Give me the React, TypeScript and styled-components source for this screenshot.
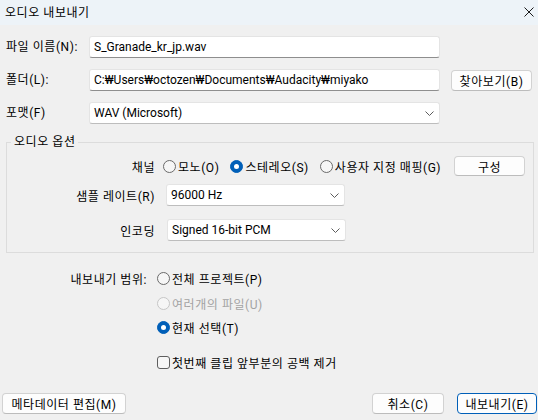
import styled, { createGlobalStyle, css } from "styled-components";

const GlobalStyle = createGlobalStyle`
  html, body {
    margin: 0;
    padding: 0;
  }
  body {
    background: #f0f0f0;
    font-family: "Roboto", "Noto Sans CJK KR", sans-serif;
    font-size: 12px;
    color: #000;
  }
`;

// hangul in Noto Sans CJK KR runs a little narrower than Malgun Gothic
const hangulText = css`
  letter-spacing: 0.55px;
  white-space: nowrap;
`;

const Window = styled.div`
  display: flex;
  flex-direction: column;
  width: 538px;
  height: 420px;
  background: #f0f0f0;
  overflow: hidden;
`;

const TitleBar = styled.div`
  display: flex;
  align-items: center;
  justify-content: space-between;
  height: 25px;
  padding: 0 4px 0 5px;
  background: #edf3f8;
`;

const Title = styled.span`
  ${hangulText};
  line-height: 16px;
`;

const CloseIcon = styled.svg`
  width: 10px;
  height: 10px;
  margin-bottom: 2px;
`;

const FileGrid = styled.div`
  display: grid;
  grid-template-columns: 72px 351px 81px;
  grid-auto-rows: 22px;
  column-gap: 11px;
  row-gap: 11px;
  align-items: center;
  margin: 11px 0 0 6px;
`;

const Label = styled.span`
  ${hangulText};
  line-height: 16px;
`;

const FieldLabel = styled.span<{ $height: number }>`
  ${hangulText};
  display: flex;
  align-items: center;
  justify-content: flex-end;
  height: ${(p) => p.$height}px;
`;

const TextField = styled.div`
  display: flex;
  align-items: center;
  box-sizing: border-box;
  height: 22px;
  padding-left: 4px;
  background: #fff;
  border: 1px solid #e4e4e4;
  border-bottom-color: #8e8e8e;
  border-radius: 3px;
  white-space: nowrap;
  overflow: hidden;
`;

const ComboBox = styled.div<{ $width?: number; $offset?: number }>`
  display: flex;
  align-items: center;
  justify-content: space-between;
  box-sizing: border-box;
  width: ${(p) => (p.$width ? `${p.$width}px` : "auto")};
  height: 22px;
  margin-left: ${(p) => p.$offset ?? 0}px;
  padding: 0 5px 0 4px;
  background: #fff;
  border: 1px solid #e4e4e4;
  border-bottom-color: #bdbdbd;
  border-radius: 3px;
  white-space: nowrap;
`;

const Chevron = styled.svg`
  width: 9px;
  height: 5px;
  flex-shrink: 0;
`;

const Button = styled.button<{ $width: number; $height?: number; $primary?: boolean }>`
  ${hangulText};
  box-sizing: border-box;
  width: ${(p) => p.$width}px;
  height: ${(p) => p.$height ?? 21}px;
  padding: 0;
  font-family: inherit;
  font-size: 12px;
  color: #000;
  background: #fdfdfd;
  border: 1px solid ${(p) => (p.$primary ? "#005fb8" : "#d2d2d2")};
  border-bottom-color: ${(p) => (p.$primary ? "#005fb8" : "#bcbcbc")};
  border-radius: 4px;
`;

const ConfigButton = styled(Button)`
  margin-left: 2px;
`;

const Group = styled.fieldset`
  margin: 10px 4px 0 6px;
  padding: 5px 0 11px 0;
  border: 1px solid #dcdcdc;
  min-width: 0;
`;

const Legend = styled.legend`
  ${hangulText};
  margin-left: 4px;
  padding: 0 3px;
  line-height: 16px;
`;

const OptionsGrid = styled.div`
  display: grid;
  grid-template-columns: 148px 1fr;
  grid-template-rows: 22px 29px 35px;
  column-gap: 8px;
  align-items: end;
`;

const RadioRow = styled.div`
  display: flex;
  align-items: center;
  height: 22px;
`;

const Option = styled.label<{ $disabled?: boolean; $last?: boolean }>`
  ${hangulText};
  display: flex;
  align-items: center;
  gap: 2px;
  height: 20px;
  margin-right: ${(p) => (p.$last ? 0 : 11)}px;
  color: ${(p) => (p.$disabled ? "#a3a3a3" : "#000")};
`;

const Radio = styled.span<{ $checked?: boolean; $disabled?: boolean }>`
  position: relative;
  box-sizing: border-box;
  width: 13px;
  height: 13px;
  border-radius: 50%;
  flex-shrink: 0;
  background: ${(p) => (p.$checked ? "#005fb8" : "#f6f6f6")};
  border: 1px solid
    ${(p) => (p.$checked ? "#005fb8" : p.$disabled ? "#c6c6c6" : "#6a6a6a")};

  &::after {
    content: "";
    display: ${(p) => (p.$checked ? "block" : "none")};
    position: absolute;
    left: 3px;
    top: 3px;
    width: 5px;
    height: 5px;
    border-radius: 50%;
    background: #fff;
  }
`;

const Checkbox = styled.span`
  box-sizing: border-box;
  width: 13px;
  height: 13px;
  flex-shrink: 0;
  background: #f6f6f6;
  border: 1px solid #5e5e5e;
  border-radius: 3px;
`;

const RangeGrid = styled.div`
  display: grid;
  grid-template-columns: 141px auto;
  grid-template-rows: 20px 25px 24px 35px;
  column-gap: 10px;
  align-items: end;
  justify-items: start;
  margin: 15px 0 0 6px;
`;

const RangeLabel = styled(FieldLabel)`
  justify-self: stretch;
`;

const Footer = styled.div`
  display: flex;
  align-items: center;
  gap: 13px;
  margin-top: auto;
  padding: 0 1px 6px 2px;
`;

const Spacer = styled.div`
  flex: 1;
`;

function Caret() {
  return (
    <Chevron viewBox="0 0 9 5">
      <path d="M0.5 0.5 L4.5 4.5 L8.5 0.5" fill="none" stroke="#5c5c5c" strokeWidth="1" />
    </Chevron>
  );
}

export default function App() {
  return (
    <>
      <GlobalStyle />
      <Window>
        <TitleBar>
          <Title>오디오 내보내기</Title>
          <CloseIcon viewBox="0 0 10 10">
            <path d="M0.5 0.5 L9.5 9.5 M9.5 0.5 L0.5 9.5" stroke="#1b1b1b" strokeWidth="1" />
          </CloseIcon>
        </TitleBar>

        <FileGrid>
          <Label>파일 이름(N):</Label>
          <TextField>S_Granade_kr_jp.wav</TextField>
          <span />
          <Label>폴더(L):</Label>
          <TextField>C:₩Users₩octozen₩Documents₩Audacity₩miyako</TextField>
          <Button $width={81}>찾아보기(B)</Button>
          <Label>포맷(F)</Label>
          <ComboBox>
            <span>WAV (Microsoft)</span>
            <Caret />
          </ComboBox>
        </FileGrid>

        <Group>
          <Legend>오디오 옵션</Legend>
          <OptionsGrid>
            <FieldLabel $height={22}>채널</FieldLabel>
            <RadioRow>
              <Option>
                <Radio />
                모노(O)
              </Option>
              <Option>
                <Radio $checked />
                스테레오(S)
              </Option>
              <Option>
                <Radio />
                사용자 지정 매핑(G)
              </Option>
              <ConfigButton $width={71} $height={20}>
                구성
              </ConfigButton>
            </RadioRow>
            <FieldLabel $height={22}>샘플 레이트(R)</FieldLabel>
            <ComboBox $width={179} $offset={3}>
              <span>96000 Hz</span>
              <Caret />
            </ComboBox>
            <FieldLabel $height={22}>인코딩</FieldLabel>
            <ComboBox $width={179} $offset={4}>
              <span>Signed 16-bit PCM</span>
              <Caret />
            </ComboBox>
          </OptionsGrid>
        </Group>

        <RangeGrid>
          <RangeLabel $height={20}>내보내기 범위:</RangeLabel>
          <Option $last>
            <Radio />
            전체 프로젝트(P)
          </Option>
          <span />
          <Option $last $disabled>
            <Radio $disabled />
            여러개의 파일(U)
          </Option>
          <span />
          <Option $last>
            <Radio $checked />
            현재 선택(T)
          </Option>
          <span />
          <Option $last>
            <Checkbox />
            첫번째 클립 앞부분의 공백 제거
          </Option>
        </RangeGrid>

        <Footer>
          <Button $width={124}>메타데이터 편집(M)</Button>
          <Spacer />
          <Button $width={72}>취소(C)</Button>
          <Button $width={80} $primary>
            내보내기(E)
          </Button>
        </Footer>
      </Window>
    </>
  );
}
